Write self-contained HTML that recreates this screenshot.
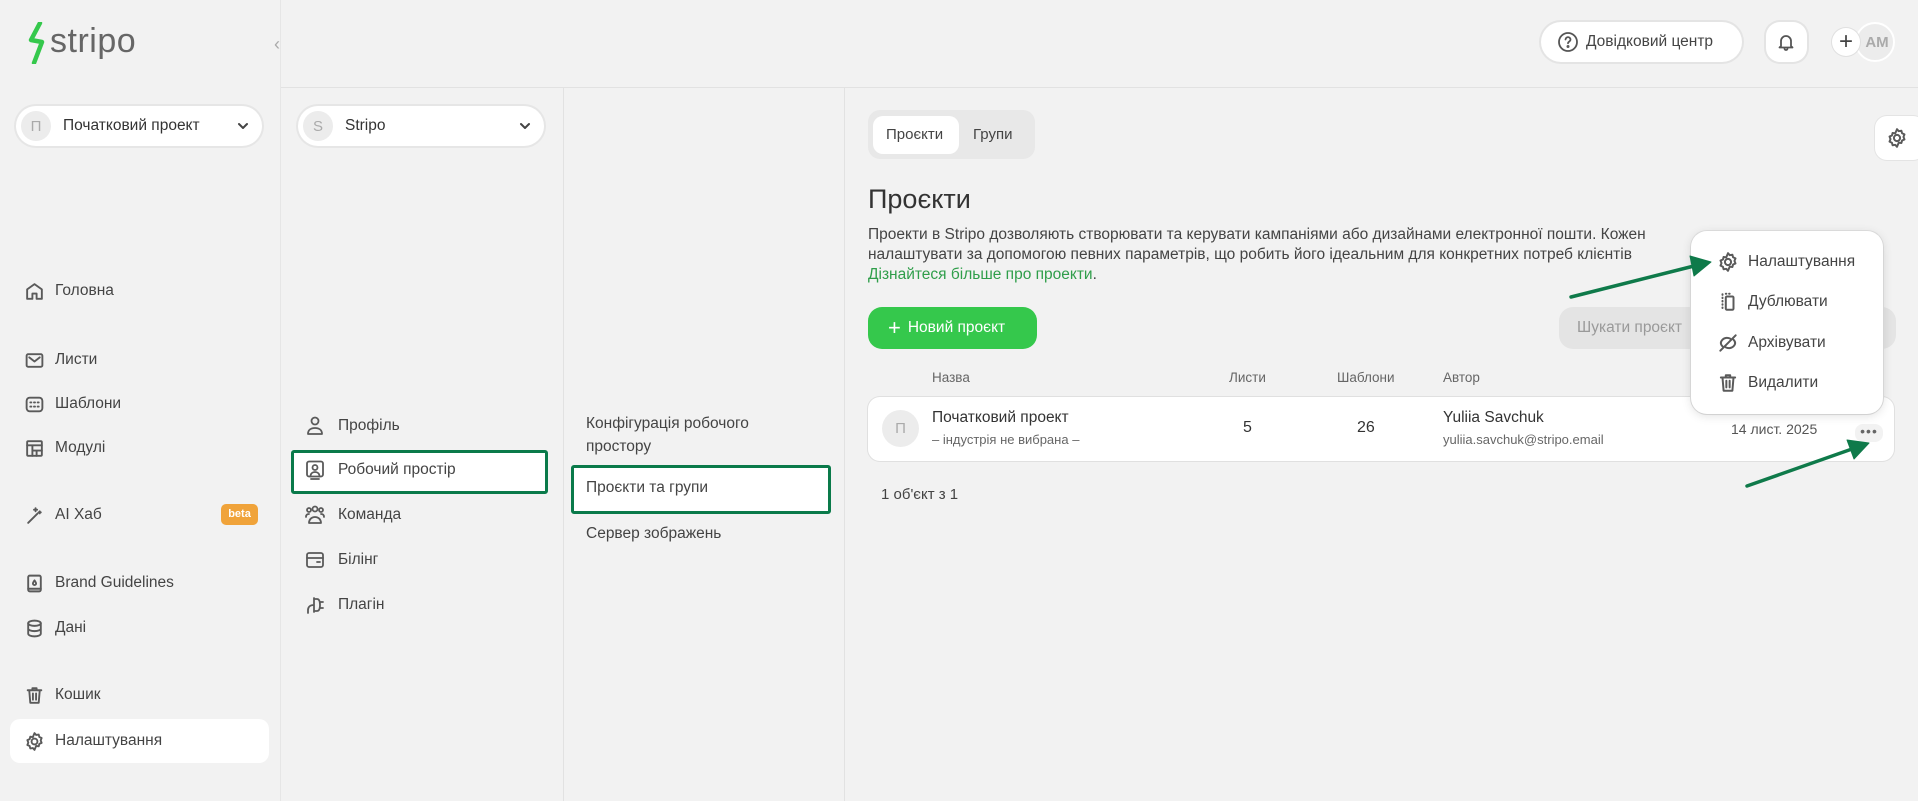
<!DOCTYPE html>
<html><head><meta charset="utf-8"><style>
*{box-sizing:border-box;margin:0;padding:0}
body{width:1918px;height:801px;background:#f2f2f2;font-family:"Liberation Sans","DejaVu Sans",sans-serif;color:#3a3a3a;position:relative;overflow:hidden;font-size:15px}
.a{position:absolute}
.vl{position:absolute;top:87px;bottom:0;width:1px;background:#e2e2e2}
.nav{position:absolute;left:24px;display:flex;align-items:center;height:24px;font-size:15.5px;color:#444}
.nav svg{width:21px;height:21px;margin-right:10px}
.n2{position:absolute;left:304px;display:flex;align-items:center;height:24px;font-size:15.5px;color:#444}
.n2 svg{width:22px;height:22px;margin-right:12px}
.t3{position:absolute;left:586px;font-size:15.5px;color:#444}
.drop{position:absolute;top:106px;height:40px;width:246px;background:#fff;border-radius:20px;box-shadow:0 0 0 2px #e6e6e6;display:flex;align-items:center;padding-left:5px;font-size:15.5px;color:#333}
.av{width:30px;height:30px;border-radius:50%;background:#ececec;color:#aaa;display:flex;align-items:center;justify-content:center;font-size:15px;margin-right:12px}
.chev{position:absolute;right:12px;top:13px}
svg{fill:none;stroke:#5a5a5a;stroke-width:1.8;stroke-linecap:round;stroke-linejoin:round}
.mi{position:absolute;left:1717px;display:flex;align-items:center;font-size:15.5px;color:#444}
.mi svg{width:22px;height:22px;margin-right:9px}
</style></head><body>
<!-- logo -->
<svg class="a" style="left:25px;top:22px;width:26px;height:42px" viewBox="0 0 26 42"><path d="M15 1 L6 18 L17 20 L9 41" stroke="#35c84c" stroke-width="4.5" /></svg>
<div class="a" style="left:50px;top:22px;font-size:34px;color:#666;letter-spacing:0.5px">stripo</div>
<div class="a" style="left:274px;top:34px;color:#aaa;font-size:18px">‹</div>
<div class="a" style="left:280px;top:0;bottom:0;width:1px;background:#e6e6e6"></div>
<div class="a" style="left:281px;right:0;top:87px;height:1px;background:#e2e2e2"></div>
<div class="vl" style="left:563px"></div>
<div class="vl" style="left:844px"></div>

<div class="drop" style="left:16px"><div class="av">П</div>Початковий проект<svg class="chev" width="14" height="14" viewBox="0 0 14 14"><path d="M3 5l4 4 4-4" stroke="#444" stroke-width="2"/></svg></div>
<div class="drop" style="left:298px"><div class="av">S</div>Stripo<svg class="chev" width="14" height="14" viewBox="0 0 14 14"><path d="M3 5l4 4 4-4" stroke="#444" stroke-width="2"/></svg></div>

<!-- left nav -->
<div class="nav" style="top:279px"><svg viewBox="0 0 20 20"><path d="M3 17V8l7-5 7 5v9h-5v-5H8v5z"/></svg>Головна</div>
<div class="nav" style="top:348px"><svg viewBox="0 0 20 20"><rect x="2.5" y="4" width="15" height="12" rx="1.5"/><path d="M5 7l5 4 5-4"/></svg>Листи</div>
<div class="nav" style="top:392px"><svg viewBox="0 0 20 20"><rect x="2.5" y="3.5" width="15" height="13" rx="3"/><path d="M6 8h1M9.5 8h1M13 8h1M6 12h1M9.5 12h1M13 12h1"/></svg>Шаблони</div>
<div class="nav" style="top:436px"><svg viewBox="0 0 20 20"><rect x="3" y="3" width="14" height="14" rx="1"/><path d="M3 7h14M8 7v10M8 12h9M12 12v5"/></svg>Модулі</div>
<div class="nav" style="top:503px"><svg viewBox="0 0 20 20"><path d="M4 17L13 8M11 3v3M9.5 4.5h3M15 6v2M14 7h2"/></svg>AI Хаб</div>
<div class="a" style="left:221px;top:504px;width:37px;height:21px;background:#f0a33a;border-radius:5px;color:#fff;font-size:11px;font-weight:bold;text-align:center;line-height:21px">beta</div>
<div class="nav" style="top:571px"><svg viewBox="0 0 20 20"><rect x="4" y="2.5" width="12" height="15" rx="1.5"/><path d="M10 7c-1 1.5-1.5 2.2-1.5 3a1.5 1.5 0 003 0c0-.8-.5-1.5-1.5-3zM4 15h12"/></svg>Brand Guidelines</div>
<div class="nav" style="top:616px"><svg viewBox="0 0 20 20"><ellipse cx="10" cy="5" rx="6" ry="2.5"/><path d="M4 5v10c0 1.4 2.7 2.5 6 2.5s6-1.1 6-2.5V5M4 10c0 1.4 2.7 2.5 6 2.5s6-1.1 6-2.5"/></svg>Дані</div>
<div class="nav" style="top:683px"><svg viewBox="0 0 20 20"><path d="M3.5 5h13M8 5V3h4v2M5 5l1 12h8l1-12M8.5 8v6M11.5 8v6"/></svg>Кошик</div>
<div class="a" style="left:10px;top:719px;width:259px;height:44px;background:#fff;border-radius:10px"></div>
<div class="nav" style="top:729px"><svg viewBox="0 0 20 20"><circle cx="10" cy="10" r="2.8"/><path d="M10 2l1.6 1.8 2.4-.4.6 2.3 2.2 1-.9 2.3.9 2.3-2.2 1-.6 2.3-2.4-.4L10 18l-1.6-1.8-2.4.4-.6-2.3-2.2-1 .9-2.3-.9-2.3 2.2-1 .6-2.3 2.4.4z"/></svg>Налаштування</div>

<!-- col 2 -->
<div class="n2" style="top:414px"><svg viewBox="0 0 22 22"><circle cx="11" cy="6" r="3.5"/><path d="M4 19c0-4 3-6 7-6s7 2 7 6z"/></svg>Профіль</div>
<div class="a" style="left:291px;top:450px;width:257px;height:44px;background:#fff;border:3px solid #0a7a4a;border-radius:3px"></div>
<div class="n2" style="top:458px"><svg viewBox="0 0 22 22"><rect x="3" y="2.5" width="16" height="15" rx="2"/><circle cx="11" cy="8.5" r="2.5"/><path d="M6.5 17.5c0-3 2-4.5 4.5-4.5s4.5 1.5 4.5 4.5M7 20h8"/></svg>Робочий простір</div>
<div class="n2" style="top:503px"><svg viewBox="0 0 22 22"><circle cx="5" cy="6" r="2"/><circle cx="11" cy="5" r="2.5"/><circle cx="17" cy="6" r="2"/><path d="M5 19c0-3.5 2.5-6 6-6s6 2.5 6 6zM2 13c0-2 1-3 3-3M20 13c0-2-1-3-3-3"/></svg>Команда</div>
<div class="n2" style="top:548px"><svg viewBox="0 0 22 22"><rect x="3" y="4" width="16" height="14" rx="2"/><path d="M3 9h16M13 13h3"/></svg>Білінг</div>
<div class="n2" style="top:593px"><svg viewBox="0 0 22 22"><path d="M10 4v14M10 5h3c2 0 3 2 3 6s-1 6-3 6h-3M16 8h3M16 14h3M10 11c-4 0-6 2-6 5v3"/></svg>Плагін</div>

<!-- col 3 -->
<div class="t3" style="top:412px;line-height:23px">Конфігурація робочого<br>простору</div>
<div class="a" style="left:571px;top:465px;width:260px;height:49px;background:#fff;border:3px solid #0a7a4a;border-radius:3px"></div>
<div class="t3" style="top:479px">Проєкти та групи</div>
<div class="t3" style="top:525px">Сервер зображень</div>

<!-- header -->
<div class="a" style="left:1541px;top:22px;width:201px;height:40px;background:#fff;border-radius:20px;box-shadow:0 0 0 2px #e4e4e4;display:flex;align-items:center;padding-left:16px;font-size:15.5px;color:#444"><svg width="22" height="22" viewBox="0 0 22 22" style="margin-right:7px"><circle cx="11" cy="11" r="9" stroke="#555" stroke-width="1.8"/><path d="M8.5 8.5a2.5 2.5 0 115 .3c0 1.7-2.5 1.7-2.5 3.5" stroke="#555" stroke-width="1.8"/><circle cx="11" cy="15.5" r=".6" fill="#555"/></svg>Довідковий центр</div>
<div class="a" style="left:1766px;top:22px;width:41px;height:40px;background:#fff;border-radius:14px;box-shadow:0 0 0 2px #e4e4e4"><svg width="20" height="20" viewBox="0 0 20 20" style="position:absolute;left:10px;top:10px"><path d="M5 14V9a5 5 0 0110 0v5l1.5 1.5h-13zM8.5 16.5a1.5 1.5 0 003 0" stroke="#555"/></svg></div>
<div class="a" style="left:1855px;top:22px;width:40px;height:40px;border-radius:50%;background:#ececec;border:2px solid #fff;color:#aaa;font-weight:bold;font-size:15px;display:flex;align-items:center;justify-content:center;padding-left:4px">AM</div>
<div class="a" style="left:1832px;top:28px;width:28px;height:28px;border-radius:50%;background:#fff;box-shadow:0 0 0 1px #e0e0e0;text-align:center;line-height:27px;font-size:24px;color:#444">+</div>

<!-- main -->
<div class="a" style="left:868px;top:110px;width:167px;height:49px;background:#e8e8e8;border-radius:12px"></div>
<div class="a" style="left:873px;top:116px;width:86px;height:38px;background:#fff;border-radius:10px"></div>
<div class="a" style="left:886px;top:126px;font-size:15px;color:#444">Проєкти</div>
<div class="a" style="left:973px;top:126px;font-size:15px;color:#444">Групи</div>
<div class="a" style="left:1875px;top:116px;width:50px;height:44px;background:#fff;border-radius:12px;box-shadow:0 0 0 1px #e4e4e4"><svg width="22" height="22" viewBox="0 0 20 20" style="position:absolute;left:11px;top:11px"><circle cx="10" cy="10" r="2.8"/><path d="M10 2l1.6 1.8 2.4-.4.6 2.3 2.2 1-.9 2.3.9 2.3-2.2 1-.6 2.3-2.4-.4L10 18l-1.6-1.8-2.4.4-.6-2.3-2.2-1 .9-2.3-.9-2.3 2.2-1 .6-2.3 2.4.4z"/></svg></div>

<div class="a" style="left:868px;top:184px;font-size:27px;color:#333">Проєкти</div>
<div class="a" style="left:868px;top:225px;font-size:15.5px;line-height:20px;color:#444;white-space:nowrap">Проекти в Stripo дозволяють створювати та керувати кампаніями або дизайнами електронної пошти. Кожен<br>налаштувати за допомогою певних параметрів, що робить його ідеальним для конкретних потреб клієнтів<br><span style="color:#2f9e4a">Дізнайтеся більше про проекти</span>.</div>

<div class="a" style="left:868px;top:307px;width:169px;height:42px;background:#35c84c;border-radius:14px;color:#fff;font-size:15.5px;display:flex;align-items:center;padding-left:20px"><span style="font-size:22px;margin-right:7px;line-height:20px">+</span>Новий проєкт</div>
<div class="a" style="left:1559px;top:307px;width:337px;height:42px;background:#e4e4e4;border-radius:14px;color:#999;font-size:15.5px;line-height:42px;padding-left:18px">Шукати проєкт</div>

<div class="a" style="left:932px;top:370px;font-size:13.5px;color:#666">Назва</div>
<div class="a" style="left:1229px;top:370px;font-size:13.5px;color:#666">Листи</div>
<div class="a" style="left:1337px;top:370px;font-size:13.5px;color:#666">Шаблони</div>
<div class="a" style="left:1443px;top:370px;font-size:13.5px;color:#666">Автор</div>

<div class="a" style="left:868px;top:397px;width:1026px;height:64px;background:#fff;border-radius:12px;box-shadow:0 0 0 1px #e0e0e0"></div>
<div class="a" style="left:882px;top:410px;width:37px;height:37px;border-radius:50%;background:#ececec;color:#aaa;text-align:center;line-height:37px;font-size:15px">П</div>
<div class="a" style="left:932px;top:409px;font-size:15.5px;color:#333">Початковий проект</div>
<div class="a" style="left:932px;top:432px;font-size:13px;color:#666">– індустрія не вибрана –</div>
<div class="a" style="left:1243px;top:419px;font-size:16px;color:#333">5</div>
<div class="a" style="left:1357px;top:419px;font-size:16px;color:#333">26</div>
<div class="a" style="left:1443px;top:409px;font-size:15.5px;color:#333">Yuliia Savchuk</div>
<div class="a" style="left:1443px;top:432px;font-size:13px;color:#666">yuliia.savchuk@stripo.email</div>
<div class="a" style="left:1731px;top:421px;font-size:14px;color:#555">14 лист. 2025</div>
<div class="a" style="left:1855px;top:424px;width:28px;height:18px;border-radius:8px;background:#f2f2f2;color:#666;font-size:14px;text-align:center;line-height:14px;letter-spacing:1px">•••</div>

<div class="a" style="left:881px;top:486px;font-size:15px;color:#444">1 об'єкт з 1</div>

<!-- menu -->
<div class="a" style="left:1691px;top:231px;width:192px;height:183px;background:#fff;border-radius:16px;box-shadow:0 2px 10px rgba(0,0,0,.12),0 0 0 1px #e2e2e2"></div>
<div class="mi" style="top:251px"><svg viewBox="0 0 20 20"><circle cx="10" cy="10" r="2.8"/><path d="M10 2l1.6 1.8 2.4-.4.6 2.3 2.2 1-.9 2.3.9 2.3-2.2 1-.6 2.3-2.4-.4L10 18l-1.6-1.8-2.4.4-.6-2.3-2.2-1 .9-2.3-.9-2.3 2.2-1 .6-2.3 2.4.4z"/></svg>Налаштування</div>
<div class="mi" style="top:291px"><svg viewBox="0 0 20 20"><rect x="8" y="5" width="7" height="12" rx="1"/><path d="M5 3v.5M5 6v.5M5 9v.5M5 12v.5M5 15v.5M8 2.5h.5M11 2.5h.5" stroke-width="1.8"/></svg>Дублювати</div>
<div class="mi" style="top:332px"><svg viewBox="0 0 20 20"><path d="M3 17L17 3M5 13c-2-2-2-4 0-6 2-2 5-2 7-1M15 7c2 2 2 4 0 6-2 2-5 2-7 1"/></svg>Архівувати</div>
<div class="mi" style="top:372px"><svg viewBox="0 0 20 20"><path d="M3.5 5h13M8 5V3h4v2M5 5l1 12h8l1-12M8.5 8v6M11.5 8v6"/></svg>Видалити</div>

<!-- arrows -->
<svg class="a" style="left:0;top:0;width:1918px;height:801px;pointer-events:none" viewBox="0 0 1918 801">
<path d="M1571 297L1694 266" stroke="#0f7a4a" stroke-width="3.5"/>
<path d="M1711 262L1690 256L1694 276Z" fill="#0f7a4a" stroke="#0f7a4a" stroke-width="1"/>
<path d="M1747 486L1852 449" stroke="#0f7a4a" stroke-width="3.5"/>
<path d="M1869 443L1847 440L1854 459Z" fill="#0f7a4a" stroke="#0f7a4a" stroke-width="1"/>
</svg>
</body></html>
